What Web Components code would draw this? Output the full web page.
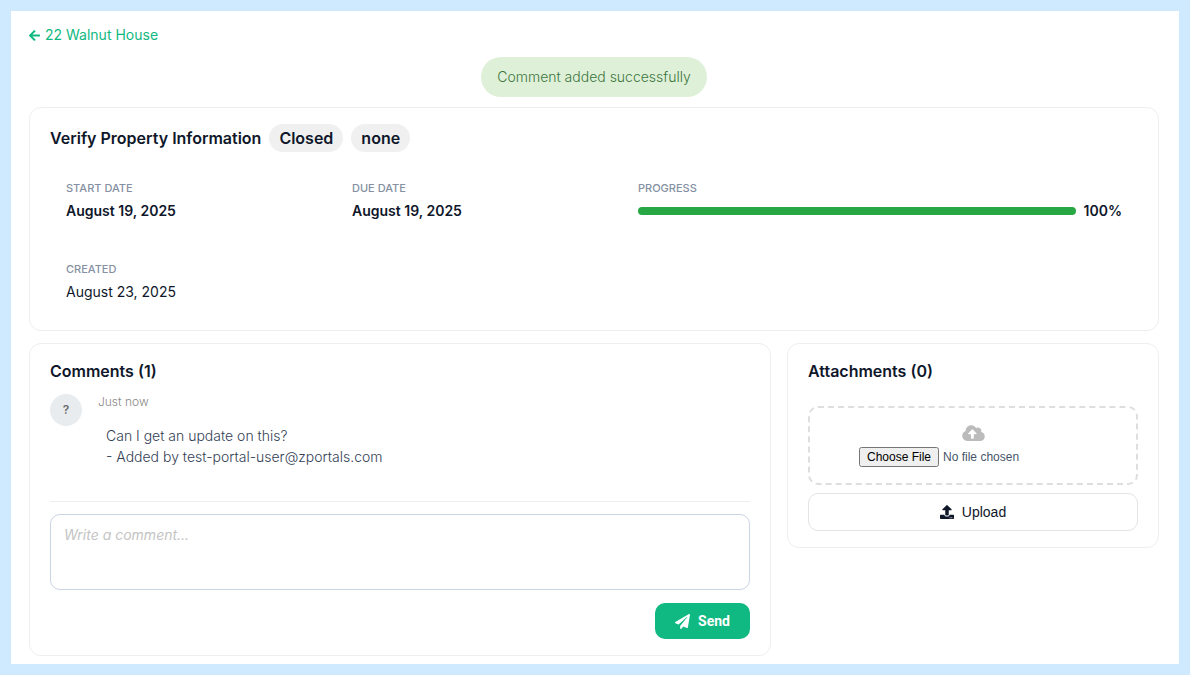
<!DOCTYPE html>
<html lang="en">
<head>
<meta charset="utf-8">
<meta name="viewport" content="width=device-width, initial-scale=1">
<title>Verify Property Information</title>
<style>
  body { margin: 0; font: 14px/21px Inter, "Open Sans", sans-serif; color: #0f172a; background: #cfe9ff; }
</style>
</head>
<body>
<task-page></task-page>

<script>
const ICONS = {
  back: ['0 0 448 512', 'M257.5 445.1l-22.2 22.2c-9.4 9.4-24.6 9.4-33.9 0L7 273c-9.4-9.4-9.4-24.6 0-33.9L201.4 44.7c9.4-9.4 24.6-9.4 33.9 0l22.2 22.2c9.5 9.5 9.3 25-.4 34.3L136.6 216H424c13.3 0 24 10.7 24 24v32c0 13.3-10.7 24-24 24H136.6l120.5 114.8c9.8 9.3 10 24.8.4 34.3z'],
  send: ['0 0 512 512', 'M476 3.2L12.5 270.6c-18.1 10.4-15.8 35.6 2.2 43.2L121 358.4l287.3-253.2c5.5-4.9 13.3 2.6 8.6 8.3L176 407v80.5c0 23.6 28.5 32.9 42.5 15.8L282 426l124.6 52.2c14.2 6 30.4-2.9 33-18.2l72-432C515 7.8 493.3-6.8 476 3.2z'],
  upload: ['0 0 512 512', 'M296 384h-80c-13.3 0-24-10.7-24-24V192h-87.7c-17.8 0-26.7-21.5-14.1-34.1L242.3 5.7c7.5-7.5 19.8-7.5 27.3 0l152.2 152.2c12.6 12.6 3.7 34.1-14.1 34.1H320v168c0 13.3-10.7 24-24 24zm216-8v112c0 13.3-10.7 24-24 24H24c-13.3 0-24-10.7-24-24V376c0-13.3 10.7-24 24-24h136v8c0 30.9 25.1 56 56 56h80c30.9 0 56-25.1 56-56v-8h136c13.3 0 24 10.7 24 24zm-124 88c0-11-9-20-20-20s-20 9-20 20 9 20 20 20 20-9 20-20zm64 0c0-11-9-20-20-20s-20 9-20 20 9 20 20 20 20-9 20-20z'],
  cloud: ['0 0 640 512', 'M537.6 226.6c4.1-10.7 6.4-22.4 6.4-34.6 0-53-43-96-96-96-19.7 0-38.1 6-53.3 16.2C367 64.2 315.3 32 256 32c-88.4 0-160 71.6-160 160 0 2.7.1 5.4.2 8.1C40.2 219.8 0 273.2 0 336c0 79.5 64.5 144 144 144h368c70.7 0 128-57.3 128-128 0-61.9-44-113.6-102.4-125.4zM393.4 288H328v112c0 8.8-7.2 16-16 16h-48c-8.8 0-16-7.2-16-16V288h-65.4c-14.3 0-21.4-17.2-11.3-27.4l105.4-105.4c6.2-6.2 16.4-6.2 22.6 0l105.4 105.4c10.1 10.1 2.9 27.4-11.3 27.4z']
};

function define(name, html, setup) {
  customElements.define(name, class extends HTMLElement {
    constructor() {
      super();
      this.attachShadow({ mode: 'open' }).innerHTML =
        '<style>*{box-sizing:border-box}:host{box-sizing:border-box}</style>' + html;
    }
    connectedCallback() { if (setup) setup(this, this.shadowRoot); }
  });
}

define('app-icon', `
  <style>
    :host { display: inline-flex; flex: none; }
    svg { display: block; width: 100%; height: 100%; fill: currentColor; }
  </style>
  <svg aria-hidden="true"><path/></svg>`,
  (el, root) => {
    const [box, d] = ICONS[el.getAttribute('name')];
    root.querySelector('svg').setAttribute('viewBox', box);
    root.querySelector('path').setAttribute('d', d);
  });

define('back-link', `
  <style>
    :host { display: flex; }
    a { display: inline-flex; align-items: center; gap: 5px; line-height: 24px; color: #10b981; text-decoration: none; }
    app-icon { width: 11px; height: 13px; }
  </style>
  <a href="#"><app-icon name="back"></app-icon><slot></slot></a>`);

define('status-toast', `
  <style>
    :host { display: block; align-self: center; padding: 8px 16px; border-radius: 20px; line-height: 24px; font-weight: 300; background: #dff0d8; color: #3c763d; }
  </style>
  <span role="status"><slot></slot></span>`);

define('panel-card', `
  <style>
    :host { display: block; padding: 16px 20px; border: 1px solid #eeeeef; border-radius: 12px; background: #fff; }
    header { display: flex; flex-wrap: wrap; align-items: center; gap: 8px; }
    h2 { margin: 0; font-size: 16px; line-height: 22px; font-weight: 600; }
  </style>
  <header><h2><slot name="title"></slot></h2><slot name="badge"></slot></header>
  <slot></slot>`);

define('status-pill', `
  <style>
    :host { display: block; padding: 0 10px; border-radius: 14px; font-size: 16px; line-height: 28px; font-weight: 600; background: #f0f0f0; }
  </style>
  <slot></slot>`);

define('detail-item', `
  <style>
    :host { display: block; padding: 16px; }
    :host([wide]) { grid-column: span 2; }
    .label { margin-bottom: 4px; font-size: 11px; line-height: 16px; font-weight: 500; color: #8590a2; text-transform: uppercase; }
    .value { font-weight: 600; }
    :host([plain]) .value { font-weight: 400; }
  </style>
  <div class="label"><slot name="label"></slot></div>
  <div class="value"><slot></slot></div>`);

define('progress-meter', `
  <style>
    :host { display: flex; align-items: center; gap: 8px; }
    progress { flex: 1; min-width: 0; height: 8px; appearance: none; border: 0; border-radius: 4px; overflow: hidden; }
    progress::-webkit-progress-bar { background: #e9ecef; }
    progress::-webkit-progress-value { background: #28a745; }
  </style>
  <progress max="100" aria-label="Progress"></progress><span></span>`,
  (el, root) => {
    root.querySelector('progress').value = el.getAttribute('value');
    root.querySelector('span').textContent = el.getAttribute('value') + '%';
  });

define('comment-item', `
  <style>
    :host { display: flex; gap: 16px; margin-top: 12px; padding-bottom: 18px; border-bottom: 1px solid #eeeeef; }
    .avatar { flex: none; width: 32px; height: 32px; border-radius: 50%; font-size: 12px; line-height: 32px; font-weight: 600; text-align: center; color: #6c6c6c; background: #e9ecef; }
    .time { font-size: 12px; line-height: 16px; font-weight: 300; color: #8a8a8a; }
    .text { padding: 15px 8px 16px; font-weight: 300; color: #334155; }
  </style>
  <div class="avatar">?</div>
  <div>
    <div class="time"><slot name="time"></slot></div>
    <div class="text"><slot></slot></div>
  </div>`);

define('comment-form', `
  <style>
    :host { display: block; }
    form { display: flex; flex-direction: column; gap: 13px; padding-top: 12px; }
    textarea { display: block; width: 100%; height: 76px; padding: 9px 13px; border: 1px solid #cbd5e1; border-radius: 10px; resize: none; font: inherit; color: inherit; background: #fff; }
    textarea::placeholder { font-style: italic; color: #c4c4c4; }
    button { display: inline-flex; align-self: flex-end; align-items: center; gap: 8px; height: 36px; padding: 0 20px; border: 0; border-radius: 10px; font: 700 14px/20px Roboto, sans-serif; color: #fff; background: #10b981; }
    app-icon { width: 15px; height: 15px; }
  </style>
  <form>
    <textarea aria-label="Write a comment" placeholder="Write a comment..."></textarea>
    <button type="button"><app-icon name="send"></app-icon>Send</button>
  </form>`);

define('file-upload', `
  <style>
    :host { display: block; margin-top: 24px; }
    form { display: flex; flex-direction: column; gap: 8px; }
    .drop { display: flex; flex-direction: column; align-items: center; gap: 5px; padding: 16px; border: 2px dashed #dedede; border-radius: 10px; }
    app-icon { width: 23px; height: 18px; color: #bbb; }
    input { width: 228px; max-width: 100%; font: 12px "Liberation Sans", Arial, sans-serif; color: #475569; }
    button { display: flex; align-items: center; justify-content: center; gap: 8px; height: 38px; border: 1px solid #e2e4e7; border-radius: 10px; font: 14px/20px "Liberation Sans", Arial, sans-serif; color: #0f172a; background: #fff; }
    button app-icon { width: 14px; height: 14px; color: inherit; }
  </style>
  <form>
    <label class="drop"><app-icon name="cloud"></app-icon><input type="file" aria-label="Attachment"></label>
    <button type="button"><app-icon name="upload"></app-icon>Upload</button>
  </form>`);

define('task-page', `
  <style>
    :host { display: block; min-height: 100vh; padding: 11px; }
    main { display: flex; flex-direction: column; padding: 12px 20px 8px 18px; background: #fff; }
    status-toast, .summary { margin-top: 10px; }
    .summary { padding-bottom: 12px; }
    .details { display: grid; grid-template-columns: repeat(4, 1fr); gap: 8px 56px; margin-top: 12px; }
    .columns { display: grid; grid-template-columns: 2fr minmax(372px, 1fr); gap: 16px; align-items: start; margin-top: 12px; }
    @media (max-width: 800px) {
      .details { grid-template-columns: 1fr 1fr; column-gap: 8px; }
      .columns { grid-template-columns: 1fr; }
    }
  </style>
  <main>
    <back-link>22 Walnut House</back-link>
    <status-toast>Comment added successfully</status-toast>
    <panel-card class="summary">
      <span slot="title">Verify Property Information</span>
      <status-pill slot="badge">Closed</status-pill>
      <status-pill slot="badge">none</status-pill>
      <div class="details">
        <detail-item><span slot="label">Start Date</span>August 19, 2025</detail-item>
        <detail-item><span slot="label">Due Date</span>August 19, 2025</detail-item>
        <detail-item wide><span slot="label">Progress</span><progress-meter value="100"></progress-meter></detail-item>
        <detail-item plain><span slot="label">Created</span>August 23, 2025</detail-item>
      </div>
    </panel-card>
    <div class="columns">
      <panel-card>
        <span slot="title">Comments (1)</span>
        <comment-item><span slot="time">Just now</span>Can I get an update on this?<br>- Added by test-portal-user@zportals.com</comment-item>
        <comment-form></comment-form>
      </panel-card>
      <panel-card>
        <span slot="title">Attachments (0)</span>
        <file-upload></file-upload>
      </panel-card>
    </div>
  </main>`);
</script>
</body>
</html>
